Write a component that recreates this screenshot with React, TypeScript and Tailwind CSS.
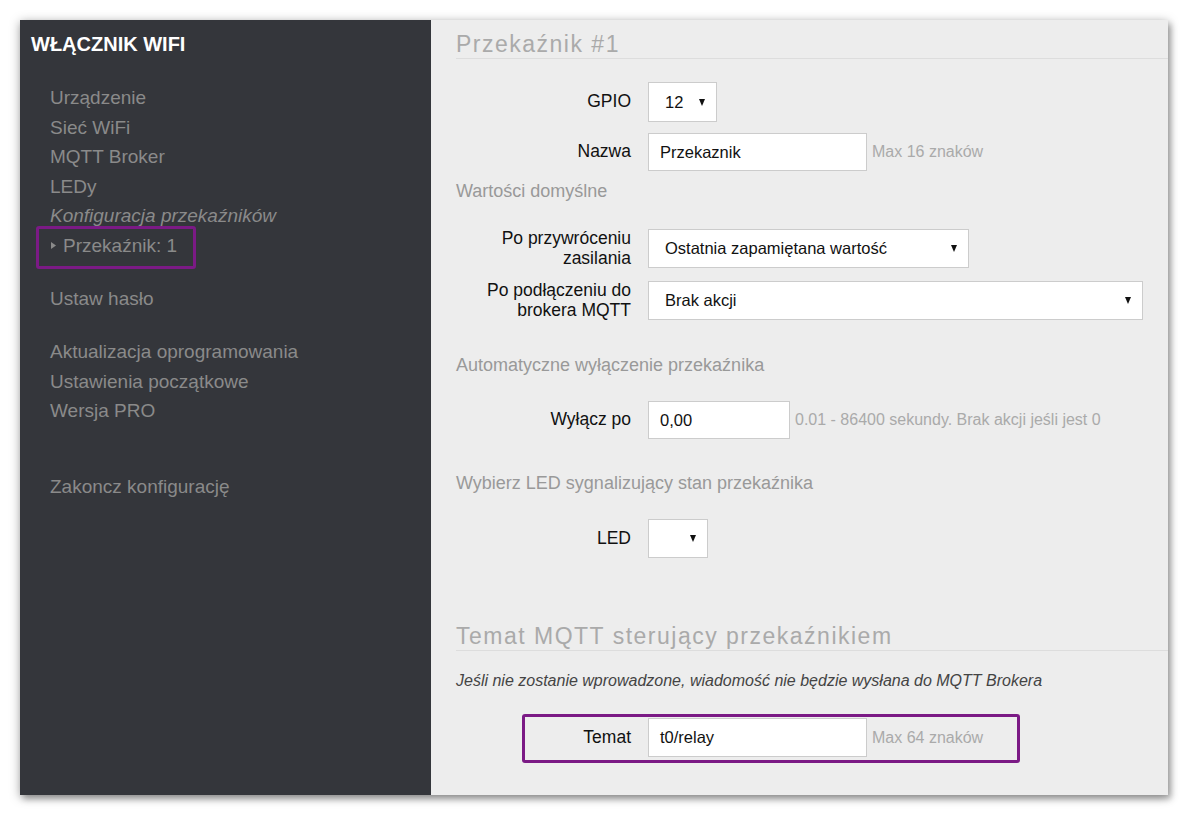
import type { ReactNode } from "react";

const font = { fontFamily: '"Liberation Sans", Arial, sans-serif' };

function Arrow() {
  return (
    <svg width="6" height="7" viewBox="0 0 6 7" className="shrink-0">
      <polygon points="0,0 6,0 3,7" fill="#111" />
    </svg>
  );
}

function Select({ value, width, h = "h-[39px]" }: { value: string; width: string; h?: string }) {
  return (
    <div
      className={`${width} ${h} flex items-center justify-between border border-[#cccccc] bg-white pl-[16px] pr-[11px] text-[16.5px] text-[#111]`}
    >
      <span>{value}</span>
      <Arrow />
    </div>
  );
}

function Input({ value, width, h = "h-[39px]" }: { value: string; width: string; h?: string }) {
  return (
    <div className={`${width} ${h} flex items-center border border-[#cccccc] bg-white px-[11px] text-[16.5px] text-[#111]`}>
      {value}
    </div>
  );
}

function Row({ label, children, className = "" }: { label: ReactNode; children: ReactNode; className?: string }) {
  return (
    <div className={`flex items-center ${className}`}>
      <div className="w-[175px] text-right text-[17.5px] leading-[19.5px] text-[#111]">{label}</div>
      <div className="ml-[17px] flex items-center">{children}</div>
    </div>
  );
}

function Hint({ children }: { children: ReactNode }) {
  return <span className="ml-[5px] text-[16px] text-[#aaaaaa]">{children}</span>;
}

function SectionTitle({ children, className = "" }: { children: ReactNode; className?: string }) {
  return (
    <div
      className={`mr-[-25px] border-b border-[#dddddd] text-[23px] leading-[28px] tracking-[1.5px] text-[#aaaaaa] ${className}`}
    >
      {children}
    </div>
  );
}

function SubTitle({ children, className = "" }: { children: ReactNode; className?: string }) {
  return <div className={`text-[18px] leading-[20px] text-[#999999] ${className}`}>{children}</div>;
}

const navTop = ["Urządzenie", "Sieć WiFi", "MQTT Broker", "LEDy"];

export default function App() {
  return (
    <div className="min-h-[815px] w-[1188px] bg-white p-[20px]" style={font}>
      <div className="flex h-[775px] w-[1148px] overflow-hidden shadow-[0_2px_10px_rgba(0,0,0,0.35),3px_4px_6px_rgba(0,0,0,0.25)]">
        {/* sidebar */}
        <aside className="relative w-[411px] shrink-0 bg-[#34363b] pt-[13px]">
          <div className="pl-[11px] text-[20px] font-bold leading-[22px] text-white">WŁĄCZNIK WIFI</div>

          <nav className="mt-[28px] pl-[30px] text-[19px] leading-[29.5px] text-[#8a8a8a]">
            {navTop.map((item) => (
              <div key={item}>{item}</div>
            ))}
            <div className="italic">Konfiguracja przekaźników</div>
            <div className="flex items-center">
              <svg width="5" height="7" viewBox="0 0 5 7" className="ml-[1px]">
                <polygon points="0,0 5,3.5 0,7" fill="#8a8a8a" />
              </svg>
              <span className="ml-[7px]">Przekaźnik: 1</span>
            </div>

            <div className="mt-[24px]">Ustaw hasło</div>

            <div className="mt-[23.5px]">Aktualizacja oprogramowania</div>
            <div>Ustawienia początkowe</div>
            <div>Wersja PRO</div>

            <div className="mt-[46.5px]">Zakoncz konfigurację</div>
          </nav>

          <div className="absolute left-[16px] top-[206px] h-[43px] w-[160px] rounded-[3px] border-[3px] border-[#7b1a85]" />
        </aside>

        {/* content */}
        <main className="flex-1 bg-[#ededed] pl-[25px] pr-[25px]">
          <SectionTitle className="pt-[10px]">Przekaźnik #1</SectionTitle>

          <Row label="GPIO" className="mt-[23px]">
            <Select value="12" width="w-[69px]" h="h-[40px]" />
          </Row>

          <Row label="Nazwa" className="mt-[11px]">
            <Input value="Przekaznik" width="w-[219px]" h="h-[38px]" />
            <Hint>Max 16 znaków</Hint>
          </Row>

          <SubTitle className="mt-[10px]">Wartości domyślne</SubTitle>

          <Row
            label={
              <>
                Po przywróceniu
                <br />
                zasilania
              </>
            }
            className="mt-[28px]"
          >
            <Select value="Ostatnia zapamiętana wartość" width="w-[321px]" />
          </Row>

          <Row
            label={
              <>
                Po podłączeniu do
                <br />
                brokera MQTT
              </>
            }
            className="mt-[13px]"
          >
            <Select value="Brak akcji" width="w-[495px]" />
          </Row>

          <SubTitle className="mt-[35px]">Automatyczne wyłączenie przekaźnika</SubTitle>

          <Row label="Wyłącz po" className="mt-[26px]">
            <Input value="0,00" width="w-[142px]" h="h-[38px]" />
            <Hint>0.01 - 86400 sekundy. Brak akcji jeśli jest 0</Hint>
          </Row>

          <SubTitle className="mt-[34px]">Wybierz LED sygnalizujący stan przekaźnika</SubTitle>

          <Row label="LED" className="mt-[26px]">
            <Select value="" width="w-[60px]" />
          </Row>

          <SectionTitle className="mt-[64px]">Temat MQTT sterujący przekaźnikiem</SectionTitle>

          <div className="mt-[20px] text-[16px] italic leading-[20px] text-[#444444]">
            Jeśli nie zostanie wprowadzone, wiadomość nie będzie wysłana do MQTT Brokera
          </div>

          <div className="relative mt-[27px]">
            <Row label="Temat">
              <Input value="t0/relay" width="w-[219px]" />
              <Hint>Max 64 znaków</Hint>
            </Row>
            <div className="absolute left-[66px] top-[-4px] h-[49px] w-[498px] rounded-[3px] border-[3px] border-[#7b1a85]" />
          </div>
        </main>
      </div>
    </div>
  );
}
